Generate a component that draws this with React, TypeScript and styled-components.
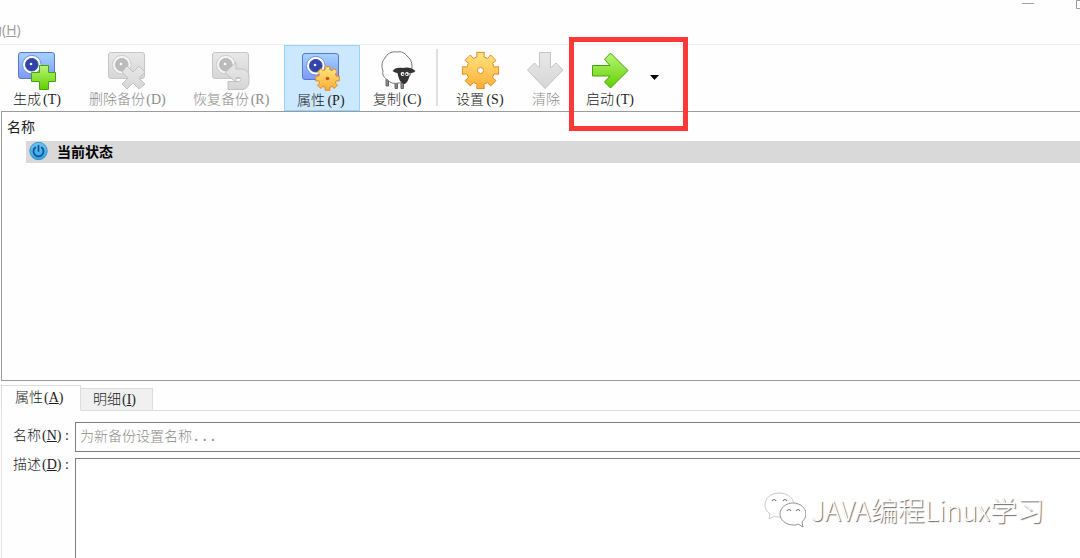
import React from "react";
import styled, { createGlobalStyle } from "styled-components";

const song = '"Liberation Serif", "Noto Sans CJK SC", serif';
const sans = '"Open Sans", "Noto Sans CJK SC", sans-serif';

const GlobalStyle = createGlobalStyle`
  * { box-sizing: border-box; }
  body { margin: 0; background: #fefefe; color: #1c1c1c; font: 14px/20px "Noto Sans CJK SC", sans-serif; overflow: hidden; }
  button, input, textarea { font: inherit; color: inherit; }
`;

const Window = styled.div`
  position: relative;
  display: flex;
  flex-direction: column;
  min-height: 100vh;
  overflow: hidden;
`;

const TitleBar = styled.header`
  display: flex;
  justify-content: flex-end;
  height: 20px;
  overflow: hidden;
`;

const WindowButton = styled.button`
  flex: none;
  width: 46px;
  height: 20px;
  padding: 0;
  border: 0;
  background: none;
  display: flex;
`;

const ControlGroup = styled.div`
  display: flex;
  margin-right: -22px;
`;

const MenuBar = styled.nav`
  height: 25px;
  border-bottom: 1px solid #f0f0f0;
`;

const MenuItem = styled.button`
  display: block;
  margin: 0 0 0 -26px;
  padding: 0;
  border: 0;
  background: none;
  color: #9c9c9c;
  font: 14px/20px ${sans};
`;

const Toolbar = styled.div`
  display: flex;
  height: 66px;
`;

const ToolButton = styled.button<{ $pressed?: boolean }>`
  flex: none;
  display: flex;
  flex-direction: column;
  align-items: center;
  justify-content: flex-start;
  padding: ${(p) => (p.$pressed ? "6px" : "5px")} 12px 0;
  border: 1px solid ${(p) => (p.$pressed ? "#99d1ff" : "transparent")};
  background: ${(p) => (p.$pressed ? "#cce8ff" : "none")};
  white-space: nowrap;

  &:disabled { color: #8c8c8c; }

  svg { margin: 0 -8px -1px; flex: none; }
`;

const Label = styled.span`
  display: block;
  font: 300 14px/20px ${song};
`;

const Keys = styled.span`
  display: inline-block;
  min-width: 22px;
  padding: 0 1px;
  font-weight: 400;
`;

const Separator = styled.div`
  width: 2px;
  margin: 4px 5px 5px 0;
  background: #e0e0e0;
`;

const StartGroup = styled.div`
  position: relative;
  display: flex;
`;

const DropButton = styled.button`
  width: 20px;
  padding: 0;
  border: 0;
  background: none;
  display: flex;
  align-items: center;
`;

const Highlight = styled.div`
  position: absolute;
  top: -8px;
  left: -4px;
  width: 119px;
  height: 94px;
  border: 5px solid #fd3838;
  pointer-events: none;
`;

const SnapshotList = styled.section`
  height: 270px;
  margin-left: 1px;
  padding-top: 4px;
  border: 1px solid #9a9ba0;
  border-right: 0;
`;

const ColumnHeader = styled.div`
  height: 25px;
  padding-left: 5px;
  line-height: 20px;
`;

const SnapshotRow = styled.div`
  display: flex;
  align-items: center;
  gap: 9px;
  height: 22px;
  margin-left: 24px;
  padding: 0 0 3px 3px;
  background: #d9d9d9;
  color: #000;
  font-weight: 700;
`;

const Tabs = styled.div`
  display: flex;
  align-items: flex-end;
  height: 30px;
  margin-left: 1px;
  padding-top: 4px;
`;

const Tab = styled.button<{ $active?: boolean }>`
  flex: none;
  width: ${(p) => (p.$active ? "80px" : "72px")};
  height: ${(p) => (p.$active ? "26px" : "23px")};
  padding: 0 0 0 ${(p) => (p.$active ? "13px" : "12px")};
  border: 1px solid #dcdcdc;
  border-left-width: ${(p) => (p.$active ? "1px" : "0")};
  border-bottom-color: ${(p) => (p.$active ? "transparent" : "#dcdcdc")};
  background: ${(p) => (p.$active ? "#fefefe" : "#f0f0f0")};
  text-align: left;
`;

const TabLine = styled.div`
  flex: 1;
  border-bottom: 1px solid #dcdcdc;
`;

const Pane = styled.form`
  flex: 1;
  display: grid;
  grid-template-columns: 62px 1fr;
  grid-template-rows: 30px 1fr;
  row-gap: 6px;
  margin-left: 1px;
  padding: 11px 0 0 11px;
  border-left: 1px solid #e4e4e4;
`;

const FieldLabel = styled.label`
  padding-top: 4px;
  white-space: nowrap;

  &[for="description"] { padding-top: 0; margin-top: -3px; }
`;

const NameInput = styled.input`
  width: 100%;
  padding: 0 4px;
  border: 1px solid #7d7d82;
  border-right: 0;
  border-radius: 0;
  background: #fff;
  font: 300 14px/20px "Liberation Mono", "Noto Sans CJK SC", monospace;
  outline: 0;

  &::placeholder { color: #8c8c8c; opacity: 1; }
`;

const Description = styled.textarea`
  display: block;
  width: 100%;
  min-height: 100px;
  height: 100%;
  border: 1px solid #7d7d82;
  border-width: 1px 0 0 1px;
  border-radius: 0;
  background: #fff;
  resize: none;
  outline: 0;
`;

const Watermark = styled.div`
  position: absolute;
  right: 36px;
  bottom: 28px;
  display: flex;
  align-items: center;
  gap: 5px;
  color: #fff;
  font: 300 27px/40px "Noto Sans CJK SC", sans-serif;
  text-shadow: 1px 1px 1px #666;
  white-space: nowrap;
  pointer-events: none;
`;

/* Outline of an eight-toothed gear of the given radius, centred on the origin. */
function gearPath(outer: number) {
  const root = outer * 0.76;
  const points: string[] = [];
  for (let tooth = 0; tooth < 8; tooth++) {
    const corners: [number, number][] = [[-14, root], [-12, outer], [12, outer], [14, root]];
    for (const [offset, radius] of corners) {
      const angle = ((tooth * 45 + offset) * Math.PI) / 180;
      points.push(`${(radius * Math.cos(angle)).toFixed(2)} ${(radius * Math.sin(angle)).toFixed(2)}`);
    }
  }
  return `M${points.join("L")}Z`;
}

function Defs() {
  return (
    <svg width="0" height="0" style={{ position: "absolute" }} aria-hidden="true">
      <defs>
        <linearGradient id="blue" x2="0" y2="1"><stop stopColor="#a6d4ff" /><stop offset="1" stopColor="#7c98fb" /></linearGradient>
        <linearGradient id="grey" x2="0" y2="1"><stop stopColor="#e8e8e8" /><stop offset="1" stopColor="#d6d6d6" /></linearGradient>
        <linearGradient id="green" x2="0" y2="1"><stop stopColor="#b8f577" /><stop offset="1" stopColor="#62d000" /></linearGradient>
        <linearGradient id="gold" x2="0" y2="1"><stop stopColor="#ffe680" /><stop offset="1" stopColor="#ffae35" /></linearGradient>
        <linearGradient id="sky" x2="0" y2="1"><stop stopColor="#6dc4f5" /><stop offset="1" stopColor="#2ba4e8" /></linearGradient>
      </defs>
    </svg>
  );
}

function Camera({ off, children }: { off?: boolean; children: React.ReactNode }) {
  return (
    <svg width="40" height="40" viewBox="1 0 40 40" aria-hidden="true">
      <rect x="1.5" y="1.5" width="36" height="26" rx="2.5" fill={off ? "url(#grey)" : "url(#blue)"} stroke={off ? "#c6c6c6" : "#5878cc"} />
      <circle cx="14.8" cy="13.7" r="9.3" fill={off ? "#f6f6f6" : "#fff"} stroke={off ? "#cacaca" : "#7590d8"} />
      <circle cx="14.8" cy="13.7" r="6.3" fill={off ? "#bbb" : "#2f43a8"} stroke={off ? "#b8b8b8" : "#3a4cb0"} />
      <circle cx="14" cy="13" r="1.3" fill="#fff" />
      {children}
    </svg>
  );
}

function Sheep() {
  return (
    <svg width="40" height="40" viewBox="0 0 40 40" aria-hidden="true">
      <path d="M8 28v7h2.500v-5M17 31v6.500h2.500v-5M23 31v6.500h2.500v-6" fill="#888" stroke="#666" />
      <path d="M19 1c4-1 8 1 10 4 3 2 5 6 5 10 0 5-1 9-4 12-2 4-6 5-10 5-4 1-8 0-10-3-4-2-6-5-5-9-2-5-1-10 2-13 2-4 6-7 12-6z" fill="#fefefe" stroke="#777" />
      <path d="M14.500 20c2-3 6-4 10-3 4-1 9-1 13 3-2 2-4 2-6 2 0 5-2 10-5 11-4-1-6-5-7-11-2 0-3-1-5-2z" fill="#333" />
      <circle cx="24.5" cy="23" r="1.9" fill="#fff" /><circle cx="29" cy="23" r="1.9" fill="#fff" />
      <circle cx="24.8" cy="23.2" r=".8" /><circle cx="28.7" cy="23.2" r=".8" />
    </svg>
  );
}

function BigIcon({ d, fill, stroke }: { d: string; fill: string; stroke: string }) {
  return (
    <svg width="40" height="40" viewBox="0 0 40 40" aria-hidden="true">
      <path d={d} fill={fill} stroke={stroke} strokeLinejoin="round" />
    </svg>
  );
}

function Caption({ text, mnemonic, underline, colon }: { text: string; mnemonic?: string; underline?: boolean; colon?: boolean }) {
  return (
    <Label>
      {text}
      {mnemonic && <Keys>({underline ? <u>{mnemonic}</u> : mnemonic}){colon && " :"}</Keys>}
    </Label>
  );
}

export default function App() {
  return (
    <Window>
      <GlobalStyle />
      <Defs />
      <TitleBar>
        <ControlGroup>
          <WindowButton aria-label="最小化">
            <svg width="46" height="20"><path d="M12 3.5h12" stroke="#a0a0a0" /></svg>
          </WindowButton>
          <WindowButton aria-label="最大化">
            <svg width="46" height="20"><path d="M20.5.5h9v8h-9z" fill="none" stroke="#999" /></svg>
          </WindowButton>
        </ControlGroup>
      </TitleBar>
      <MenuBar>
        <MenuItem>帮助(<u>H</u>)</MenuItem>
      </MenuBar>

      <Toolbar role="toolbar">
        <ToolButton>
          <Camera><path d="M22.5 14.5h9v7h7v9h-7v8h-9v-8h-8v-9h8z" fill="url(#green)" stroke="#48a010" /></Camera>
          <Caption text="生成" mnemonic="T" />
        </ToolButton>
        <ToolButton disabled>
          <Camera off><path d="M20 15l6 6 6-6 6 6-6 6 6 6-6 5-6-6-6 6-5-5 6-6-6-6z" fill="url(#grey)" stroke="#c2c2c2" /></Camera>
          <Caption text="删除备份" mnemonic="D" />
        </ToolButton>
        <ToolButton disabled>
          <Camera off><path d="M14 21.500l11-10v6.500h5c5 0 8 3 8 8v4c0 6-3 8.500-8 8.500H17v-8h10c2 0 3-1 3-2s-1-2-2-2h-3v5z" fill="url(#grey)" stroke="#c2c2c2" /></Camera>
          <Caption text="恢复备份" mnemonic="R" />
        </ToolButton>
        <ToolButton $pressed aria-pressed="true">
          <Camera>
            <path d={gearPath(12)} transform="translate(26.5 26.5)" fill="url(#gold)" stroke="#e08a28" strokeLinejoin="round" />
            <circle cx="26.5" cy="26.5" r="1.8" fill="#c85414" />
          </Camera>
          <Caption text="属性" mnemonic="P" />
        </ToolButton>
        <ToolButton>
          <Sheep />
          <Caption text="复制" mnemonic="C" />
        </ToolButton>
        <Separator />
        <ToolButton>
          <svg width="40" height="40" viewBox="0 0 40 40" aria-hidden="true">
            <path d={gearPath(18.5)} transform="translate(19.5 19.5)" fill="url(#gold)" stroke="#e58a2c" strokeLinejoin="round" />
            <circle cx="19.5" cy="19.5" r="3" fill="#fff" stroke="#d88a3c" />
          </svg>
          <Caption text="设置" mnemonic="S" />
        </ToolButton>
        <ToolButton disabled>
          <BigIcon d="M13.500 1.500h11v15.500l5.500-5 7 7L19 37.500l-17.500-18.500 7-7 5 5z" fill="url(#grey)" stroke="#c4c4c4" />
          <Caption text="清除" />
        </ToolButton>
        <StartGroup>
          <ToolButton>
            <BigIcon d="M1.500 14.500h17.500l-5.500-6 6-6.500L37 19.500 19.500 37l-6-6 5.500-6H1.500z" fill="url(#green)" stroke="#48a010" />
            <Caption text="启动" mnemonic="T" />
          </ToolButton>
          <DropButton aria-label="启动选项">
            <svg width="11" height="6"><path d="M1 0h9L5.500 5z" fill="#000" /></svg>
          </DropButton>
          <Highlight />
        </StartGroup>
      </Toolbar>

      <SnapshotList>
        <ColumnHeader>名称</ColumnHeader>
        <SnapshotRow>
          <svg width="19" height="20" viewBox="0 0 19 20" aria-hidden="true">
            <circle cx="9.5" cy="10" r="8.7" fill="url(#sky)" stroke="#3d93cb" />
            <path d="M6.300 6.500a5 5 0 1 0 6.400 0M9.500 4.500v5.500" fill="none" stroke="#12508c" strokeWidth="1.7" strokeLinecap="round" />
          </svg>
          当前状态
        </SnapshotRow>
      </SnapshotList>

      <Tabs role="tablist">
        <Tab $active role="tab" aria-selected="true"><Caption text="属性" mnemonic="A" underline /></Tab>
        <Tab role="tab" aria-selected="false"><Caption text="明细" mnemonic="I" underline /></Tab>
        <TabLine />
      </Tabs>
      <Pane>
        <FieldLabel htmlFor="name"><Caption text="名称" mnemonic="N" underline colon /></FieldLabel>
        <NameInput id="name" placeholder="为新备份设置名称..." />
        <FieldLabel htmlFor="description"><Caption text="描述" mnemonic="D" underline colon /></FieldLabel>
        <Description id="description" />
      </Pane>

      <Watermark>
        <svg width="42" height="36" viewBox="0 0 42 36" aria-hidden="true">
          <g fill="#fff" stroke="#bbb" strokeWidth=".8">
            <path d="M15 1C7 1 1 6 1 13c0 4 2 7 5 9l-1 5 5-3c2 1 4 1 6 1 8 0 14-5 14-12S23 1 15 1z" />
            <path d="M29 11c-7 0-13 5-13 11s6 11 13 11c2 0 4 0 5-1l5 3-1-5c2-2 4-5 4-8 0-6-6-11-13-11z" stroke="#777" />
          </g>
          <path d="M8 9q2-3 4 0M19 9q2-3 4 0M23 19q2-3 4 0M32 19q2-3 4 0" fill="none" stroke="#777" strokeWidth="1.2" />
        </svg>
        JAVA编程Linux学习
      </Watermark>
    </Window>
  );
}
